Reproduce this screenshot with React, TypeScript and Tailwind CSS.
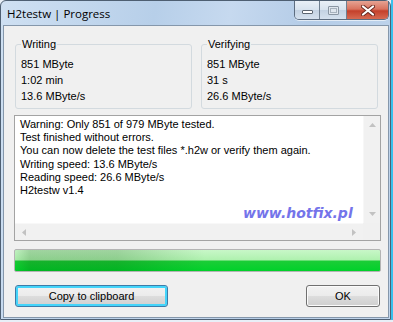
import React from "react";

const font = { fontFamily: '"Liberation Sans", Arial, sans-serif' };

function GroupBox({ title, lines }: { title: string; lines: string[] }) {
  return (
    <div className="relative h-[65px] w-[177px] rounded-[3px] border border-[#d3dadf] pl-[5px] pt-[11px] text-[11px] leading-[16px] text-black">
      <span className="absolute left-[5px] top-[-8px] bg-[#f0f0f0] px-[1px] leading-[14px]">{title}</span>
      {lines.map((l) => (
        <div key={l}>{l}</div>
      ))}
    </div>
  );
}

function Arrow({ dir }: { dir: "up" | "down" | "left" | "right" }) {
  const pts = {
    up: "0,4 3.5,0 7,4",
    down: "0,0 3.5,4 7,0",
    left: "4,0 0,3.5 4,7",
    right: "0,0 4,3.5 0,7",
  }[dir];
  const vertical = dir === "up" || dir === "down";
  return (
    <svg width={vertical ? 7 : 4} height={vertical ? 4 : 7} viewBox={vertical ? "0 0 7 4" : "0 0 4 7"}>
      <polygon points={pts} fill="#c2c2c2" />
    </svg>
  );
}

function CaptionButtons() {
  return (
    <div className="mr-[1px] flex h-[19px] self-start overflow-hidden rounded-b-[5px] border border-t-0 border-[#5d6d80] shadow-[0_1px_0_rgba(255,255,255,0.6)]">
      <div className="flex w-[25px] items-end justify-center border-r border-[#6f7f90] bg-[linear-gradient(#e9f0f7_0%,#d7e2ee_50%,#c3d2e2_51%,#d5e1ee_100%)] pb-[5px]">
        <div className="h-[4px] w-[11px] rounded-[1px] border border-[#5b6570] bg-white" />
      </div>
      <div className="flex w-[27px] items-center justify-center border-r border-[#6f7f90] bg-[linear-gradient(#e9f0f7_0%,#d7e2ee_50%,#c3d2e2_51%,#d5e1ee_100%)]">
        <div className="mt-[1px] h-[9px] w-[11px] rounded-[1px] border border-[#8a96a3] bg-[#dfe6ee] p-[1px]">
          <div className="h-full w-full border border-[#a7b2bd]" />
        </div>
      </div>
      <div className="flex w-[41px] items-center justify-center bg-[linear-gradient(#e6a393_0%,#d9735f_45%,#c4402b_55%,#d66a52_100%)]">
        <svg width="14" height="11" viewBox="0 0 14 11">
          <path d="M2 1.5 L12 9.5 M12 1.5 L2 9.5" stroke="#6b2a20" strokeWidth="4" strokeLinecap="round" />
          <path d="M2 1.5 L12 9.5 M12 1.5 L2 9.5" stroke="#ffffff" strokeWidth="2.2" strokeLinecap="round" />
        </svg>
      </div>
    </div>
  );
}

function Button({ label, focused, className }: { label: string; focused?: boolean; className: string }) {
  return (
    <div
      className={`flex h-[22px] items-center justify-center rounded-[3px] border text-[11px] text-black ${
        focused
          ? "border-[#3d7ca8] shadow-[inset_0_0_0_2px_#44d4fa]"
          : "border-[#707070] shadow-[inset_0_0_0_1px_#fbfbfb]"
      } bg-[linear-gradient(#f2f2f2_0%,#ebebeb_50%,#dddddd_51%,#cfcfcf_100%)] ${className}`}
    >
      {label}
    </div>
  );
}

export default function App() {
  const memo = [
    "Warning: Only 851 of 979 MByte tested.",
    "Test finished without errors.",
    "You can now delete the test files *.h2w or verify them again.",
    "Writing speed: 13.6 MByte/s",
    "Reading speed: 26.6 MByte/s",
    "H2testw v1.4",
  ];
  return (
    <div className="flex h-[322px] w-[393px] flex-col bg-[#e8eff7]" style={font}>
      <div className="flex h-[320px]">
        <div className="flex h-[320px] w-[391px] flex-col rounded-t-[6px] border border-[#4e5f72] bg-[linear-gradient(100deg,#cfe0f2_0%,#b7cfe9_35%,#c6d9ef_52%,#b4cce7_70%,#c2d6ed_100%)]">
          <div className="flex h-[24px] items-start justify-between">
            <span
              className="pl-[6px] pt-[5px] text-[11.5px] leading-[15px] text-black"
              style={{ fontFamily: '"Open Sans", "Noto Sans", sans-serif' }}
            >
              H2testw | Progress
            </span>
            <CaptionButtons />
          </div>
          <div className="mb-[1px] ml-[2px] mr-[1px] flex flex-1 flex-col border border-[#8597ab] bg-[#f0f0f0] pl-[10px] pt-[18px]">
            <div className="ml-[1px] flex gap-[9px]">
              <GroupBox title="Writing" lines={["851 MByte", "1:02 min", "13.6 MByte/s"]} />
              <GroupBox title="Verifying" lines={["851 MByte", "31 s", "26.6 MByte/s"]} />
            </div>

            <div className="relative mt-[6px] flex h-[126px] w-[367px] flex-col border border-[#a3a3a3] bg-white">
              <div className="flex flex-1">
                <div className="flex-1 pl-[5px] pt-[2px] text-[11px] leading-[13.2px] text-black">
                  {memo.map((l) => (
                    <div key={l} className="whitespace-nowrap">{l}</div>
                  ))}
                </div>
                <div className="flex w-[17px] flex-col items-center justify-between border-l border-[#f7f7f7] bg-[#f1f1f1] pb-[7px] pt-[7px]">
                  <Arrow dir="up" />
                  <Arrow dir="down" />
                </div>
              </div>
              <div className="flex h-[17px]">
                <div className="flex flex-1 items-center justify-between border-t border-[#f8f8f8] bg-[#f1f1f1] pl-[7px] pr-[7px]">
                  <Arrow dir="left" />
                  <Arrow dir="right" />
                </div>
                <div className="w-[17px] bg-[#f0f0f0]" />
              </div>
              <span
                className="absolute left-[228px] top-[88px] text-[14px] font-bold italic leading-[18px] text-[#7474ea]"
                style={{ fontFamily: '"DejaVu Sans", Verdana, sans-serif' }}
              >
                www.hotfix.pl
              </span>
            </div>

            <div className="relative mt-[8px] h-[23px] w-[367px] overflow-hidden rounded-[2px] border border-[#b4b4b4] bg-[linear-gradient(#c8f7c8_0%,#aef1ae_48%,#1ccd37_52%,#00d12a_100%)]">
              <div className="absolute inset-0 bg-[linear-gradient(90deg,rgba(0,70,0,0.03)_0%,rgba(0,70,0,0.2)_4%,rgba(0,70,0,0.2)_28%,rgba(0,70,0,0.08)_42%,rgba(0,70,0,0)_52%)]" />
            </div>

            <div className="mt-[13px] flex w-[367px] justify-between">
              <Button label="Copy to clipboard" focused className="ml-[1px] w-[153px]" />
              <Button label="OK" className="mr-[1px] w-[74px]" />
            </div>
          </div>
        </div>
        <div className="h-[320px] w-[2px] bg-[#3ac0ec]" />
      </div>
    </div>
  );
}
